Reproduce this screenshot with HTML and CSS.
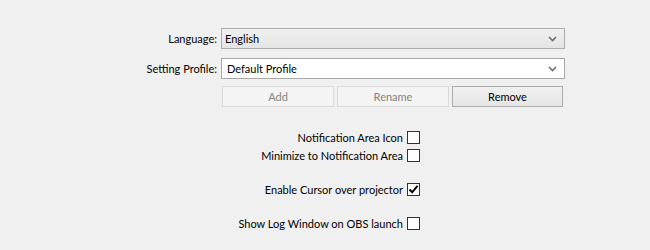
FILE: index.html
```html
<!DOCTYPE html>
<html lang="en">
<head>
    <meta charset="UTF-8">
    <title>General Settings</title>
    <link rel="stylesheet" href="styles.css">
</head>
<body>
    <div class="settings">
        <div class="form-row">
            <label class="label">Language:</label>
            <div class="combo combo-gray">
                <span>English</span>
                <svg class="chevron" width="9" height="6" viewBox="0 0 9 6"><path d="M1 1 L4.5 4.5 L8 1" fill="none" stroke="#6d6d6d" stroke-width="1.6"/></svg>
            </div>
        </div>
        <div class="form-row">
            <label class="label">Setting Profile:</label>
            <div class="combo combo-white">
                <span>Default Profile</span>
                <svg class="chevron" width="9" height="6" viewBox="0 0 9 6"><path d="M1 1 L4.5 4.5 L8 1" fill="none" stroke="#6d6d6d" stroke-width="1.6"/></svg>
            </div>
        </div>
        <div class="form-row">
            <span class="label"></span>
            <div class="buttons">
                <button class="btn" disabled>Add</button>
                <button class="btn" disabled>Rename</button>
                <button class="btn">Remove</button>
            </div>
        </div>

        <div class="checks">
            <label class="check-row">Notification Area Icon <span class="box"></span></label>
            <label class="check-row">Minimize to Notification Area <span class="box"></span></label>
        </div>
        <div class="checks">
            <label class="check-row">Enable Cursor over projector <span class="box checked">
                <svg width="11" height="11" viewBox="0 0 11 11"><path d="M1.5 5.5 L4.2 8.3 L9.5 1.8" fill="none" stroke="#000" stroke-width="2"/></svg>
            </span></label>
        </div>
        <div class="checks">
            <label class="check-row">Show Log Window on OBS launch <span class="box"></span></label>
        </div>
    </div>
</body>
</html>
```

FILE: styles.css
```css
body {
    margin: 0;
    background: #f0f0f0;
    font-family: Lato, "Noto Sans", sans-serif;
    font-size: 11px;
    color: #000;
}

.settings {
    padding-top: 28px;
    padding-left: 100px;
    width: 465px;
}

.form-row {
    display: grid;
    grid-template-columns: 117px 344px;
    column-gap: 4px;
    align-items: center;
    margin-bottom: 9px;
}

.form-row:nth-child(2) {
    margin-bottom: 7px;
}

.label {
    text-align: right;
    white-space: nowrap;
}

.combo {
    height: 21px;
    box-sizing: border-box;
    border: 1px solid #acacac;
    display: flex;
    align-items: center;
    justify-content: space-between;
    padding: 0 7px 0 3px;
}

.combo-gray {
    background: linear-gradient(#f0f0f0, #e5e5e5);
}

.combo-white {
    background: #fff;
    border-color: #a9a9a9;
    padding-left: 5px;
}

.buttons {
    display: grid;
    grid-template-columns: 112px 112px 111px;
    column-gap: 3px;
    margin-left: 1px;
}

.btn {
    height: 21px;
    font: inherit;
    color: #000;
    background: linear-gradient(#f0f0f0, #e5e5e5);
    border: 1px solid #acacac;
    padding: 0;
}

.btn:disabled {
    color: #838383;
    background: #f4f4f4;
    border-color: #d9d9d9;
}

.checks {
    width: 320px;
    margin-bottom: 16px;
}

.settings .form-row + .checks {
    margin-top: 21px;
}

.check-row {
    display: flex;
    justify-content: flex-end;
    align-items: center;
    gap: 4px;
    height: 18px;
}

.box {
    width: 13px;
    height: 13px;
    box-sizing: border-box;
    border: 1px solid #333;
    background: #fff;
    display: flex;
    align-items: center;
    justify-content: center;
}
```
